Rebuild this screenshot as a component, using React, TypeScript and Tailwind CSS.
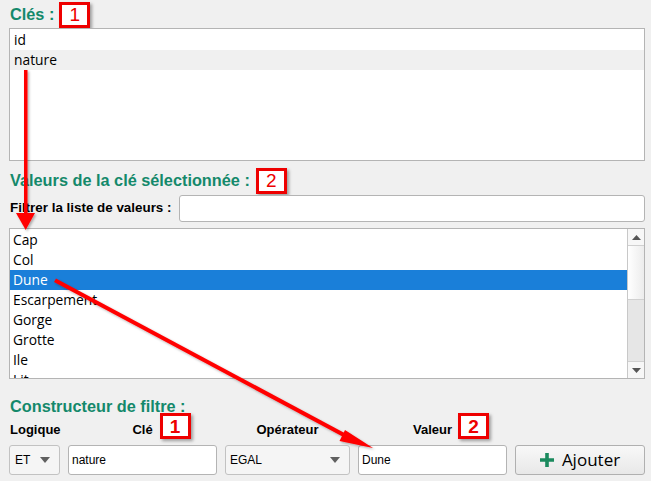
import React from 'react';

const keys = ['id', 'nature'];
const values = ['Cap', 'Col', 'Dune', 'Escarpement', 'Gorge', 'Grotte', 'Ile', 'Lit'];

const Badge = ({ n, className = '' }: { n: string; className?: string }) => (
    <span
        className={`inline-flex items-center justify-center w-[31px] h-[26px] bg-white border-[3px] border-[#ee0000] text-[#ee0000] text-[19px] leading-none shadow-[2px_2px_3px_rgba(0,0,0,0.35)] font-['Liberation_Sans',sans-serif] ${className}`}
    >
        {n}
    </span>
);

const Heading = ({ children }: { children: React.ReactNode }) => (
    <span className="text-[16.3px] font-bold text-[#14896b] font-['Liberation_Sans',Arial,sans-serif]">{children}</span>
);

const Caret = () => (
    <svg width="10" height="6" viewBox="0 0 10 6" className="shrink-0">
        <path d="M0 0 L10 0 L5 6 Z" fill="#606060" />
    </svg>
);

const App: React.FC = () => {
    return (
        <div className="relative w-[651px] h-[481px] bg-[#f0f0f0] overflow-hidden text-black font-['Open_Sans','Noto_Sans',sans-serif]">
            <div className="flex flex-col pl-[9px] pr-[6px]">
                {/* Clés */}
                <div className="flex items-center h-[28px] pt-[1px] pl-[1px]">
                    <Heading>Clés :</Heading>
                    <Badge n="1" className="ml-[5px]" />
                </div>
                <div className="h-[133px] bg-white border border-[#b4b4b4] text-[13.8px] pt-[1px]">
                    {keys.map((k) => (
                        <div key={k} className={`h-[20px] flex items-center pl-[4px] ${k === 'nature' ? 'bg-[#f0f0f0]' : ''}`}>
                            {k}
                        </div>
                    ))}
                </div>

                {/* Valeurs */}
                <div className="flex items-center h-[34px] pt-[5px] pl-[1px]">
                    <Heading>Valeurs de la clé sélectionnée :</Heading>
                    <Badge n="2" className="ml-[6px]" />
                </div>
                <div className="flex items-center h-[27px] gap-[7px]">
                    <span className="text-[13.4px] font-bold font-['Liberation_Sans',Arial,sans-serif] pl-[1px]">Filtrer la liste de valeurs :</span>
                    <div className="flex-1 h-[27px] bg-white border border-[#b4b4b4] rounded-[3px]" />
                </div>
                <div className="mt-[6px] h-[151px] bg-white border border-[#b4b4b4] flex overflow-hidden">
                    <div className="flex-1 text-[13.8px] overflow-hidden pt-[1px]">
                        {values.map((v) => (
                            <div
                                key={v}
                                className={`h-[20px] shrink-0 flex items-center pl-[3px] ${v === 'Dune' ? 'bg-[#1a7fd9] text-white' : ''}`}
                            >
                                {v}
                            </div>
                        ))}
                    </div>
                    <div className="w-[17px] border-l border-[#c8c8c8] flex flex-col bg-[#e6e6e6]">
                        <div className="h-[17px] bg-[#f7f7f7] border-b border-[#d0d0d0] flex items-center justify-center">
                            <svg width="9" height="5" viewBox="0 0 9 5"><path d="M0 5 L9 5 L4.5 0 Z" fill="#555" /></svg>
                        </div>
                        <div className="h-[54px] bg-gradient-to-r from-white to-[#ececec] border-b border-[#d0d0d0]" />
                        <div className="flex-1" />
                        <div className="h-[17px] bg-[#f7f7f7] border-t border-[#d0d0d0] flex items-center justify-center">
                            <svg width="9" height="5" viewBox="0 0 9 5"><path d="M0 0 L9 0 L4.5 5 Z" fill="#555" /></svg>
                        </div>
                    </div>
                </div>

                {/* Constructeur */}
                <div className="flex items-center h-[36px] pt-[19px] pl-[1px]">
                    <Heading>Constructeur de filtre :</Heading>
                </div>
                <div className="grid grid-cols-[51px_149px_125px_149px_130px] gap-x-[8px] mt-[4px] text-[13px] font-bold font-['Liberation_Sans',Arial,sans-serif]">
                    <div className="h-[22px] flex items-center pl-[1px] whitespace-nowrap">Logique</div>
                    <div className="h-[22px] flex items-center justify-center">
                        <span className="relative">
                            Clé
                            <Badge n="1" className="absolute left-full ml-[7px] top-[-7px]" />
                        </span>
                    </div>
                    <div className="h-[22px] flex items-center justify-center">Opérateur</div>
                    <div className="h-[22px] flex items-center justify-center">
                        <span className="relative">
                            Valeur
                            <Badge n="2" className="absolute left-full ml-[6px] top-[-7px]" />
                        </span>
                    </div>
                    <div />
                </div>
                <div className="grid grid-cols-[51px_149px_125px_149px_130px] gap-x-[8px] mt-[4px] h-[30px] text-[12px] font-['Liberation_Sans',Arial,sans-serif]">
                    <div className="bg-[#f5f5f5] border border-[#c2c2c2] rounded-[3px] flex items-center justify-between pl-[5px] pr-[9px]">
                        <span>ET</span>
                        <Caret />
                    </div>
                    <div className="bg-white border border-[#b4b4b4] rounded-[3px] flex items-center pl-[3px]">nature</div>
                    <div className="bg-[#f5f5f5] border border-[#c2c2c2] rounded-[3px] flex items-center justify-between pl-[4px] pr-[9px]">
                        <span>EGAL</span>
                        <Caret />
                    </div>
                    <div className="bg-white border border-[#b4b4b4] rounded-[3px] flex items-center pl-[3px]">Dune</div>
                    <div className="bg-gradient-to-b from-[#f8f8f8] to-[#e8e8e8] border border-[#b0b0b0] rounded-[3px] flex items-center justify-center gap-[8px] text-[17px] font-['Open_Sans','Noto_Sans',sans-serif]">
                        <svg width="14" height="14" viewBox="0 0 14 14">
                            <path d="M5.2 0 H8.8 V5.2 H14 V8.8 H8.8 V14 H5.2 V8.8 H0 V5.2 H5.2 Z" fill="#1b8a5e" />
                        </svg>
                        <span>Ajouter</span>
                    </div>
                </div>
            </div>

            {/* annotation arrows */}
            <svg className="absolute inset-0 pointer-events-none" width="651" height="481" viewBox="0 0 651 481">
                <defs>
                    <filter id="sh" x="-10%" y="-10%" width="130%" height="130%">
                        <feDropShadow dx="1.5" dy="1.5" stdDeviation="1" floodColor="#000" floodOpacity="0.3" />
                    </filter>
                </defs>
                <g filter="url(#sh)" fill="#ff0000" stroke="none">
                    <rect x="24" y="70" width="3.5" height="146" />
                    <path d="M16 213 L35 213 L25.7 230 Z" />
                    <path d="M56 278.5 L352 437 L350 440.5 L54 282 Z" />
                    <path d="M345 430 L373 448 L339.5 441 Z" />
                </g>
            </svg>
        </div>
    );
};

export default App;
